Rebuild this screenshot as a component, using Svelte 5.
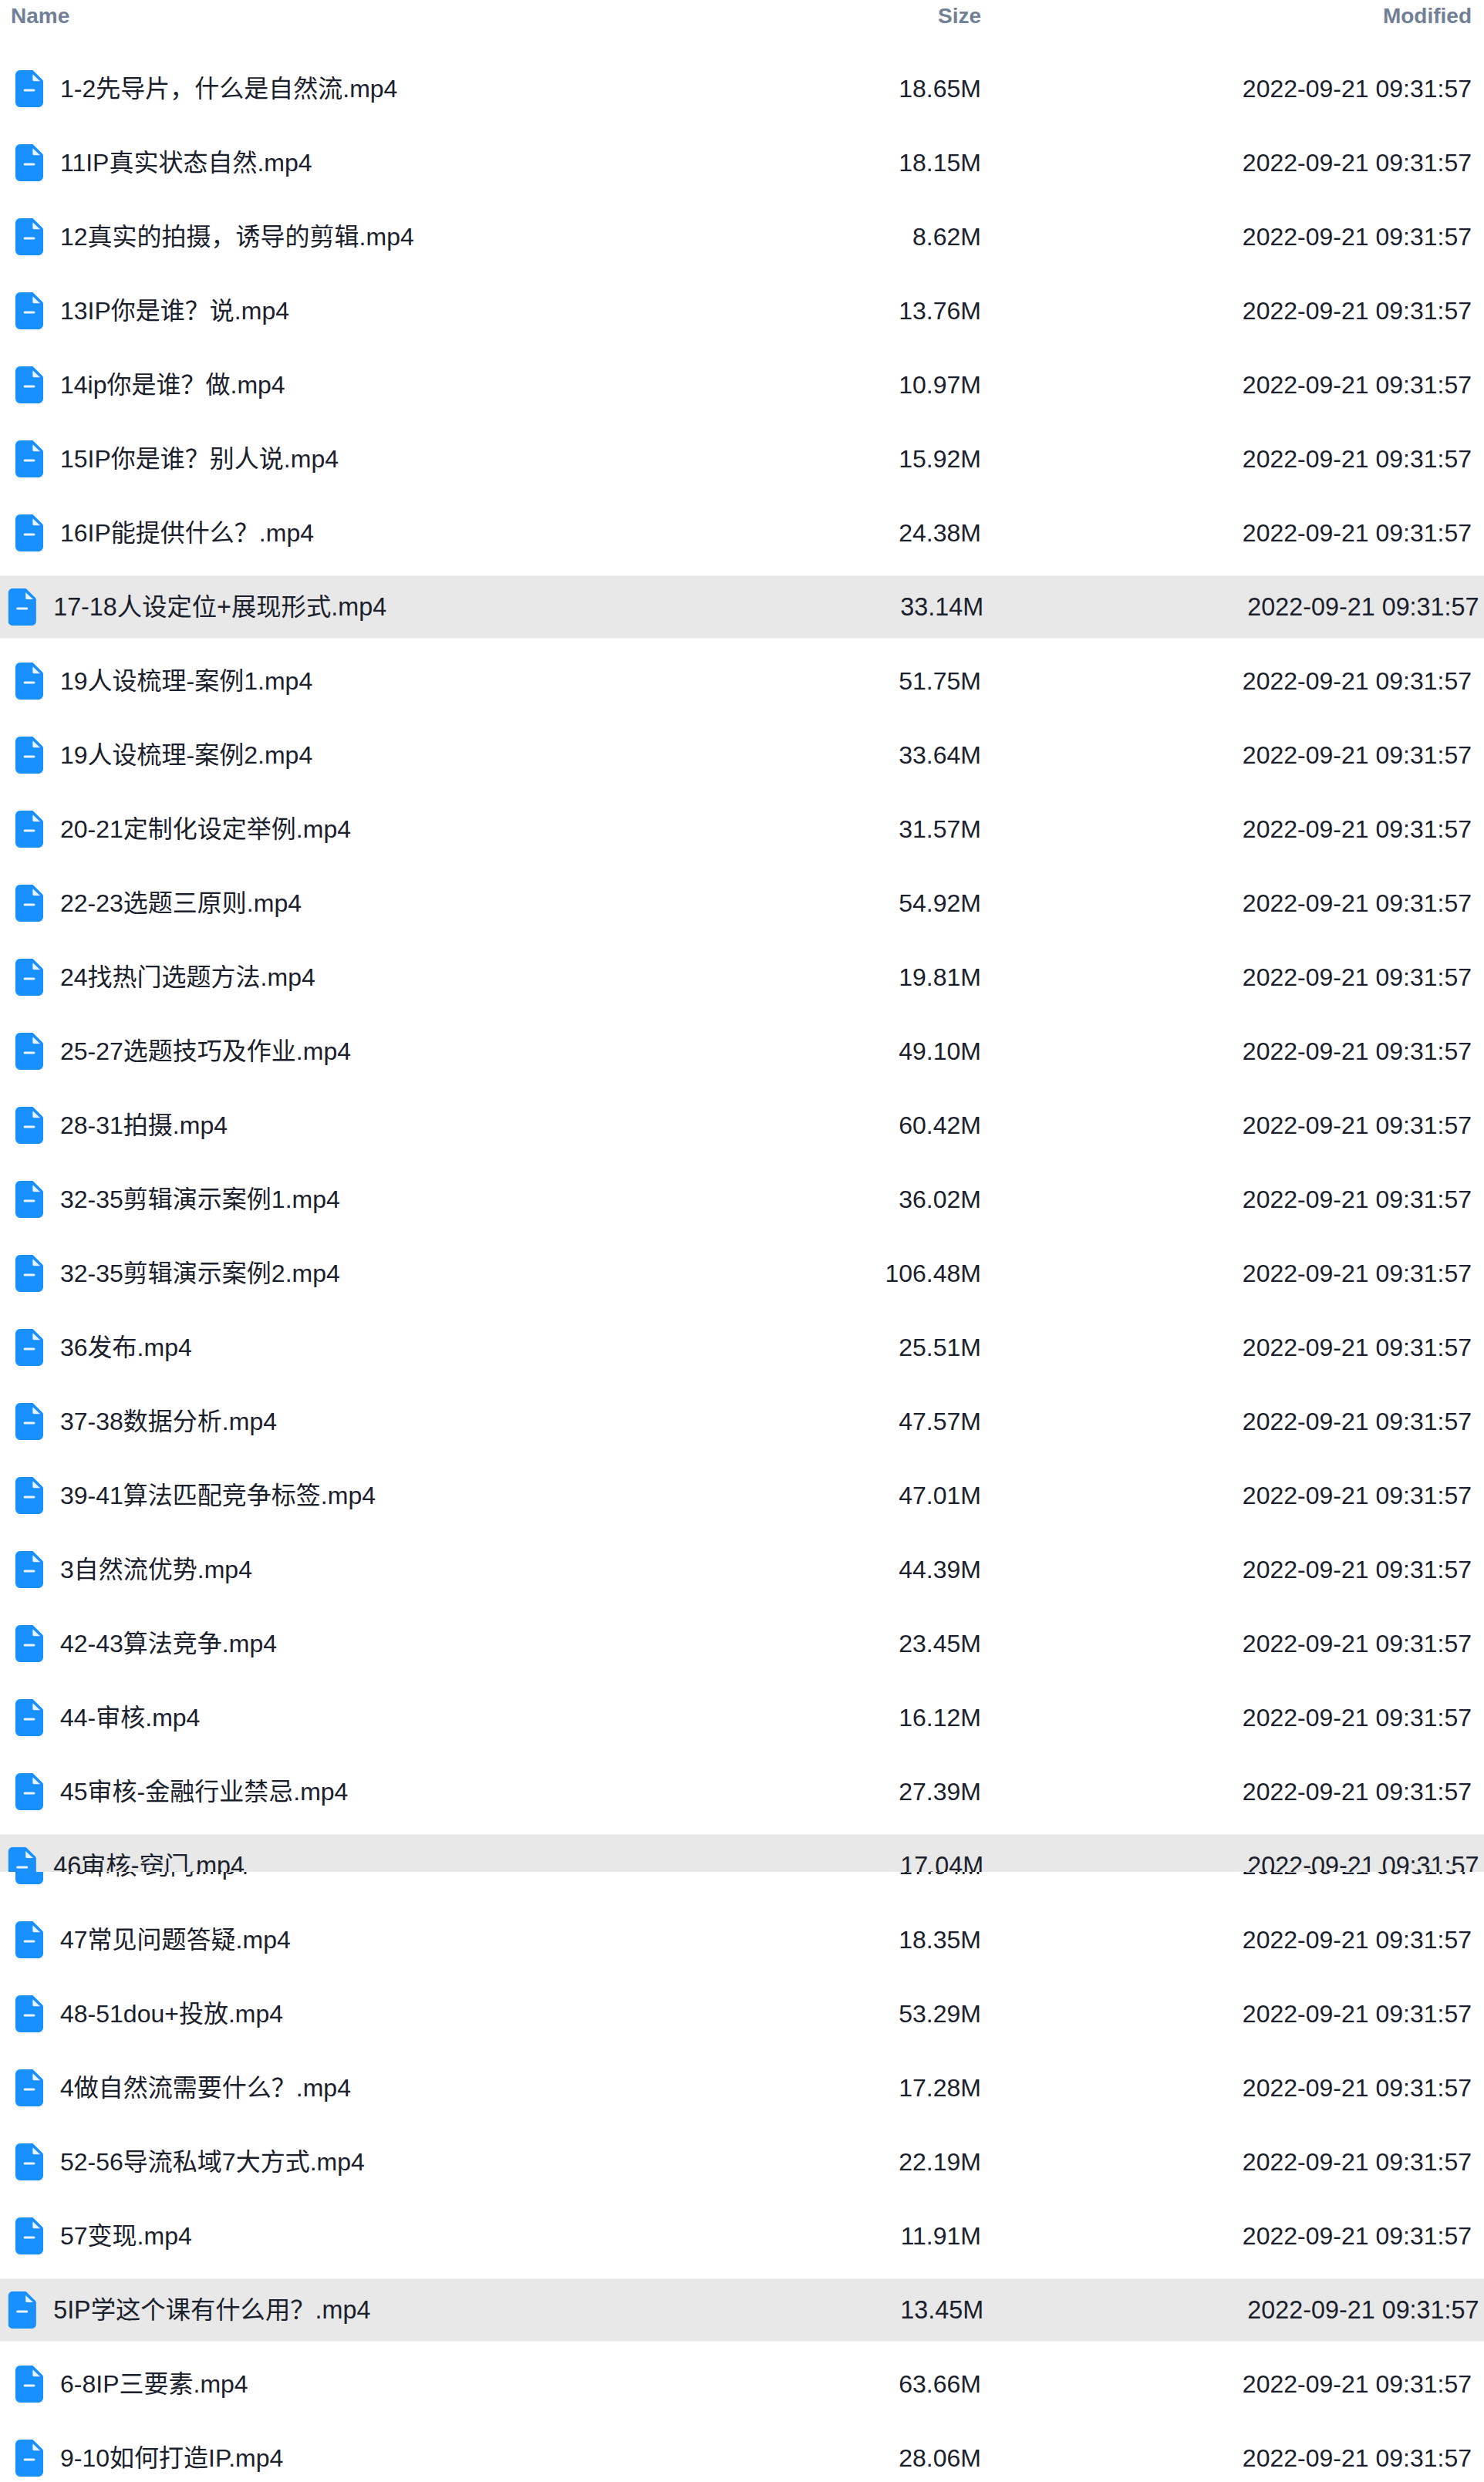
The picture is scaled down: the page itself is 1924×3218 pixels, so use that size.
<script>
	const files = [
		['1-2先导片，什么是自然流.mp4', '18.65M'],
		['11IP真实状态自然.mp4', '18.15M'],
		['12真实的拍摄，诱导的剪辑.mp4', '8.62M'],
		['13IP你是谁？说.mp4', '13.76M'],
		['14ip你是谁？做.mp4', '10.97M'],
		['15IP你是谁？别人说.mp4', '15.92M'],
		['16IP能提供什么？.mp4', '24.38M'],
		['17-18人设定位+展现形式.mp4', '33.14M', 'hover'],
		['19人设梳理-案例1.mp4', '51.75M'],
		['19人设梳理-案例2.mp4', '33.64M'],
		['20-21定制化设定举例.mp4', '31.57M'],
		['22-23选题三原则.mp4', '54.92M'],
		['24找热门选题方法.mp4', '19.81M'],
		['25-27选题技巧及作业.mp4', '49.10M'],
		['28-31拍摄.mp4', '60.42M'],
		['32-35剪辑演示案例1.mp4', '36.02M'],
		['32-35剪辑演示案例2.mp4', '106.48M'],
		['36发布.mp4', '25.51M'],
		['37-38数据分析.mp4', '47.57M'],
		['39-41算法匹配竞争标签.mp4', '47.01M'],
		['3自然流优势.mp4', '44.39M'],
		['42-43算法竞争.mp4', '23.45M'],
		['44-审核.mp4', '16.12M'],
		['45审核-金融行业禁忌.mp4', '27.39M'],
		['46审核-窍门.mp4', '17.04M', 'stale'],
		['47常见问题答疑.mp4', '18.35M'],
		['48-51dou+投放.mp4', '53.29M'],
		['4做自然流需要什么？.mp4', '17.28M'],
		['52-56导流私域7大方式.mp4', '22.19M'],
		['57变现.mp4', '11.91M'],
		['5IP学这个课有什么用？.mp4', '13.45M', 'hover'],
		['6-8IP三要素.mp4', '63.66M'],
		['9-10如何打造IP.mp4', '28.06M']
	];
	const modified = '2022-09-21 09:31:57';
</script>

{#snippet cells(name, size)}
	<div class="name">
		<svg class="icon" viewBox="0 0 36 48" width="36" height="48" aria-hidden="true">
			<path
				fill="#1890ff"
				d="M6 0H21.5a3 3 0 0 1 2.1.9L35.1 12.4a3 3 0 0 1 .9 2.1V42a6 6 0 0 1-6 6H6a6 6 0 0 1-6-6V6a6 6 0 0 1 6-6Z"
			/>
			<path fill="#e8f3ff" d="M22.4 5.2 32 14.2H24a1.6 1.6 0 0 1-1.6-1.6Z" />
			<rect x="10.5" y="24.5" width="15" height="3" rx="1.5" fill="#e8f3ff" />
		</svg>
		<span>{name}</span>
	</div>
	<div class="size">{size}</div>
	<div class="modified">{modified}</div>
{/snippet}

<div class="page">
	<header class="head">
		<div>Name</div>
		<div class="size">Size</div>
		<div class="modified">Modified</div>
	</header>

	<div class="list">
		{#each files as [name, size, state]}
			<div class="row" class:hover={state === 'hover'}>
				{@render cells(name, size)}
				{#if state === 'stale'}
					<!-- half-painted hover layer caught by the capture -->
					<div class="stale">
						<div class="row hover">
							{@render cells(name, size)}
						</div>
					</div>
				{/if}
			</div>
		{/each}
	</div>
</div>

<style>
	:global(body) {
		background: #fff;
	}

	.page {
		height: 3218px;
		overflow: hidden;
		font-family: 'Liberation Sans', 'Noto Sans CJK SC', sans-serif;
		color: #1a202c;
	}

	.head {
		display: grid;
		grid-template-columns: 1fr 200px 636px;
		align-items: center;
		height: 75px;
		padding: 0 16px 33px 14px;
		box-sizing: border-box;
		font-size: 28px;
		font-weight: 700;
		color: #718096;
	}

	.list {
		display: flex;
		flex-direction: column;
		gap: 16px;
	}

	.row {
		position: relative;
		display: grid;
		grid-template-columns: 1fr 200px 636px;
		align-items: center;
		height: 80px;
		padding: 0 16px 0 20px;
		box-sizing: border-box;
		font-size: 32px;
		line-height: 40px;
	}

	.row.hover {
		background: #e8e8e8;
		border-radius: 4px;
		transform: scale(1.01);
	}

	.name {
		display: flex;
		align-items: center;
		gap: 22px;
	}

	.icon {
		flex: none;
	}

	.size,
	.modified {
		text-align: right;
	}

	.stale {
		position: absolute;
		inset: -1px 0 auto 0;
		height: 49px;
		overflow: hidden;
	}

	.stale .row {
		top: 1px;
	}
</style>
